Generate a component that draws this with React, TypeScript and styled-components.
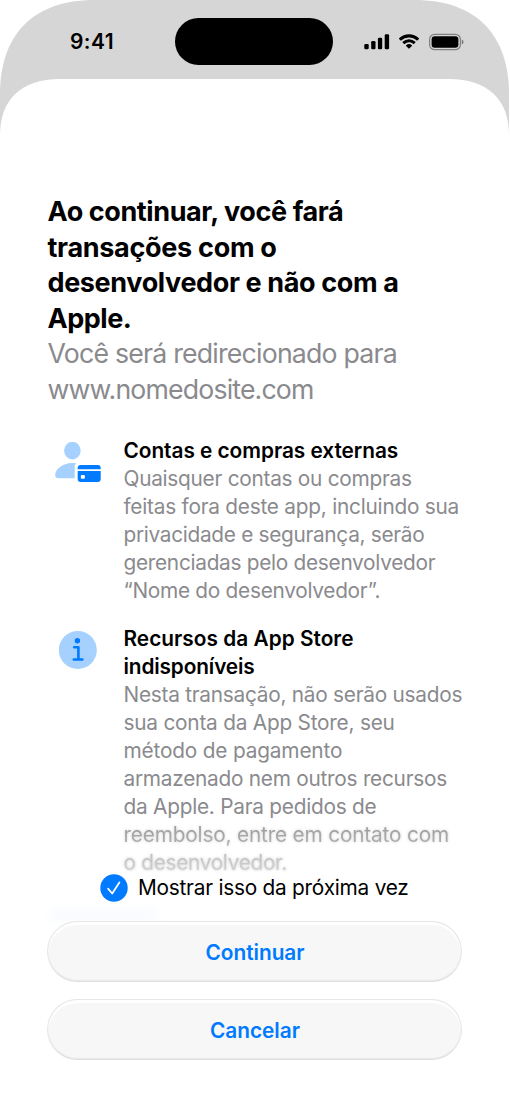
import React from "react";
import styled, { createGlobalStyle } from "styled-components";

const GlobalStyle = createGlobalStyle`
  *, *::before, *::after { box-sizing: border-box; }
  body { margin: 0; background: #fff; overflow: hidden; }
  h1, h2, p { margin: 0; font: inherit; }
`;

const Device = styled.main`
  width: 509px;
  height: 1109px;
  display: flex;
  flex-direction: column;
  overflow: hidden;
  clip-path: path("M0 1109V94C0 34 34 0 94 0H415C475 0 509 34 509 94V1109Z");
  background: linear-gradient(#d6d6d6 0 160px, #fff 160px);
  color: #000;
  font-family: Inter, "Liberation Sans", sans-serif;
`;

const StatusBar = styled.header`
  height: 79px;
  flex: none;
  display: grid;
  grid-template-columns: 175px 158px 1fr;
  padding-top: 18px;
`;

const Clock = styled.time`
  padding-left: 70px;
  line-height: 47px;
  font-size: 21px;
  font-weight: 600;
  letter-spacing: 0.4px;
`;

const Island = styled.div`
  height: 47px;
  border-radius: 24px;
  background: #000;
`;

const Indicators = styled.div`
  height: 47px;
  padding-left: 31px;
  display: flex;
  align-items: center;
  svg { display: block; }
`;

const Sheet = styled.section`
  flex: 1;
  min-height: 0;
  display: flex;
  flex-direction: column;
  clip-path: path("M0 1030V56C0 20 22 0 60 0H449C487 0 509 20 509 56V1030Z");
  background: #fff;
`;

const Heading = styled.div`
  padding: 115px 0 0 47.5px;
  font-size: 27px;
  line-height: 35.5px;
`;

const Title = styled.h1`
  font-weight: 700;
`;

const Subtitle = styled.p`
  color: #8a8a8e;
  font-size: 26.7px;
`;

const Line = styled.span<{ $track?: number }>`
  display: block;
  width: max-content;
  white-space: pre;
  letter-spacing: ${(p) => p.$track ?? 0}px;
`;

const Feature = styled.article<{ $top: number }>`
  display: grid;
  grid-template-columns: 123.5px 1fr;
  padding-top: ${(p) => p.$top}px;
  font-size: 20.8px;
  line-height: 28px;
`;

const FeatureIcon = styled.div<{ $left: number; $top: number }>`
  padding: ${(p) => p.$top}px 0 0 ${(p) => p.$left}px;
  svg { display: block; }
`;

const FeatureTitle = styled.h2`
  font-weight: 600;
`;

const FeatureText = styled.p`
  color: #8a8a8e;
`;

const Softened = styled(Line)<{ $ink: string; $halo: string }>`
  color: transparent;
  background: ${(p) => p.$ink};
  background-clip: text;
  filter: drop-shadow(0 0 1.5px ${(p) => p.$halo});
`;

const Footer = styled.footer`
  display: flex;
  flex-direction: column;
  padding: 0 47.5px 0 46.5px;
`;

const Toggle = styled.label`
  display: flex;
  align-items: center;
  gap: 10.5px;
  height: 28px;
  margin: -3.5px 0 19.5px 53px;
  font-size: 20.8px;
  svg { display: block; flex: none; }
`;

const LinkGlow = styled.div`
  width: 108px;
  height: 10px;
  margin: -11px 0 1px 2px;
  border-radius: 5px;
  background: #f7faff;
  filter: blur(5px);
`;

const Button = styled.button`
  height: 61px;
  margin: 0 0 17px;
  padding: 2px 0 0 2px;
  border: 1px solid #e6e6e6;
  border-bottom-color: #dedede;
  border-radius: 31px;
  background: #f7f7f7;
  box-shadow: inset 0 3px 1px #fff, inset 0 -1px 1px #e8e8e8;
  color: #007aff;
  font: 600 20.8px Inter, "Liberation Sans", sans-serif;
  display: flex;
  align-items: center;
  justify-content: center;
  position: relative;
`;

const SignalIcon = () => (
  <svg width="27" height="18" viewBox="0 0 27 18">
    <rect x="0.3" y="11" width="4.4" height="5.3" rx="1.3" />
    <rect x="7.2" y="8" width="4.3" height="8.3" rx="1.3" />
    <rect x="13.9" y="4.8" width="4.3" height="11.5" rx="1.3" />
    <rect x="20.7" y="1.2" width="4.4" height="15.1" rx="1.3" />
  </svg>
);

const WifiGlyph = styled.svg`
  margin-left: 7px;
`;

const WifiIcon = () => (
  <WifiGlyph width="22" height="18" viewBox="0 0 22 18">
    <path d="M11 4.400c2.900 0 5.700 1.100 7.800 3.100.2.2.4.2.6 0l1.500-1.500c.2-.2.2-.5 0-.7a14.400 14.400 0 0 0-19.800 0c-.2.2-.2.5 0 .7l1.500 1.500c.2.2.4.2.6 0A11.300 11.300 0 0 1 11 4.400z" />
    <path d="M11 9.200c1.600 0 3.100.6 4.300 1.700.2.2.5.2.6 0l1.500-1.500c.2-.2.2-.5 0-.7a9.300 9.300 0 0 0-12.800 0c-.2.2-.2.5 0 .7l1.500 1.500c.2.2.4.2.6 0A6.300 6.300 0 0 1 11 9.200z" />
    <path d="M13.900 12.900c.2-.2.2-.5 0-.7a4.500 4.500 0 0 0-5.800 0c-.2.2-.2.5 0 .7l2.500 2.600c.2.2.5.2.7 0z" />
  </WifiGlyph>
);

const BatteryGlyph = styled.svg`
  margin-left: 9px;
`;

const BatteryIcon = () => (
  <BatteryGlyph width="36" height="18" viewBox="0 0 36 18">
    <rect x="0.6" y="1.300" width="30.800" height="15.400" rx="5" fill="none" stroke="#000" strokeOpacity=".4" strokeWidth="1.200" />
    <rect x="2.600" y="3.200" width="26.800" height="11.600" rx="3.200" />
    <path d="M32.800 6.500v5c1-.4 1.700-1.400 1.700-2.500s-.7-2.100-1.700-2.500z" fillOpacity=".45" />
  </BatteryGlyph>
);

const AccountCardIcon = () => (
  <svg width="47" height="42" viewBox="0 0 47 42">
    <ellipse cx="17.400" cy="8.600" rx="8.300" ry="8.800" fill="#a6d1ff" />
    <path d="M21.600 21.300A25 25 0 0 0 17.400 21C6.500 21 .2 28 .2 33c0 2.200 1.100 3.200 3.300 3.200h16.200V24.500c0-1.400.7-2.500 1.900-3.200z" fill="#a6d1ff" />
    <path d="M22.700 27.200v-1.100c0-2 1-3 3-3h17c2 0 3 1 3 3v1.100zM22.700 29.100h23v8c0 2-1 3-3 3h-17c-2 0-3-1-3-3z" fill="#007aff" />
    <rect x="25.800" y="33.100" width="4.100" height="3.700" rx="1" fill="#fff" />
  </svg>
);

const InfoIcon = () => (
  <svg width="38" height="38" viewBox="0 0 38 38">
    <circle cx="18.800" cy="19" r="19" fill="#a6d1ff" />
    <circle cx="18.400" cy="9.700" r="2.700" fill="#007aff" />
    <path d="M15.200 16.300h4.200v12M14.800 28.500h8.600" fill="none" stroke="#007aff" strokeWidth="2.600" strokeLinecap="round" strokeLinejoin="round" />
  </svg>
);

const CheckIcon = () => (
  <svg width="28" height="28" viewBox="0 0 28 28">
    <circle cx="14" cy="14" r="13.700" fill="#007aff" />
    <path d="M8.200 14.800l4 4.700 7.200-11" fill="none" stroke="#fff" strokeWidth="1.800" strokeLinecap="round" strokeLinejoin="round" />
  </svg>
);

export default function App() {
  return (
    <>
      <GlobalStyle />
      <Device>
        <StatusBar>
          <Clock>9:41</Clock>
          <Island />
          <Indicators>
            <SignalIcon />
            <WifiIcon />
            <BatteryIcon />
          </Indicators>
        </StatusBar>
        <Sheet>
          <Heading>
            <Title>
              <Line $track={-0.4}>Ao continuar, você fará</Line>
              <Line $track={-0.3}>transações com o</Line>
              <Line $track={-0.37}>desenvolvedor e não com a</Line>
              <Line $track={-0.45}>Apple.</Line>
            </Title>
            <Subtitle>
              <Line $track={-0.79}>Você será redirecionado para</Line>
              <Line $track={-0.84}>www.nomedosite.com</Line>
            </Subtitle>
          </Heading>
          <Feature $top={30}>
            <FeatureIcon $left={55} $top={5}>
              <AccountCardIcon />
            </FeatureIcon>
            <div>
              <FeatureTitle>
                <Line $track={-0.03}>Contas e compras externas</Line>
              </FeatureTitle>
              <FeatureText>
                <Line $track={-0.26}>Quaisquer contas ou compras</Line>
                <Line $track={-0.23}>feitas fora deste app, incluindo sua</Line>
                <Line $track={-0.3}>privacidade e segurança, serão</Line>
                <Line $track={-0.28}>gerenciadas pelo desenvolvedor</Line>
                <Line $track={-0.27}>“Nome do desenvolvedor”.</Line>
              </FeatureText>
            </div>
          </Feature>
          <Feature $top={20}>
            <FeatureIcon $left={59} $top={6}>
              <InfoIcon />
            </FeatureIcon>
            <div>
              <FeatureTitle>
                <Line $track={0.03}>Recursos da App Store</Line>
                <Line $track={-0.13}>indisponíveis</Line>
              </FeatureTitle>
              <FeatureText>
                <Line $track={-0.25}>Nesta transação, não serão usados</Line>
                <Line $track={-0.22}>sua conta da App Store, seu</Line>
                <Line $track={-0.17}>método de pagamento</Line>
                <Line $track={-0.25}>armazenado nem outros recursos</Line>
                <Line $track={-0.24}>da Apple. Para pedidos de</Line>
                <Softened $track={-0.18} $ink="linear-gradient(#98989b, #b4b4b6)" $halo="#00000030">
                  reembolso, entre em contato com
                </Softened>
                <Softened $track={-0.3} $ink="linear-gradient(#bcbcbe, #d6d6d7)" $halo="#00000038">
                  o desenvolvedor.
                </Softened>
              </FeatureText>
            </div>
          </Feature>
          <Footer>
            <Toggle>
              <CheckIcon />
              <Line $track={-0.23}>Mostrar isso da próxima vez</Line>
            </Toggle>
            <LinkGlow />
            <Button>
              <Line $track={0}>Continuar</Line>
            </Button>
            <Button>
              <Line $track={0}>Cancelar</Line>
            </Button>
          </Footer>
        </Sheet>
      </Device>
    </>
  );
}
